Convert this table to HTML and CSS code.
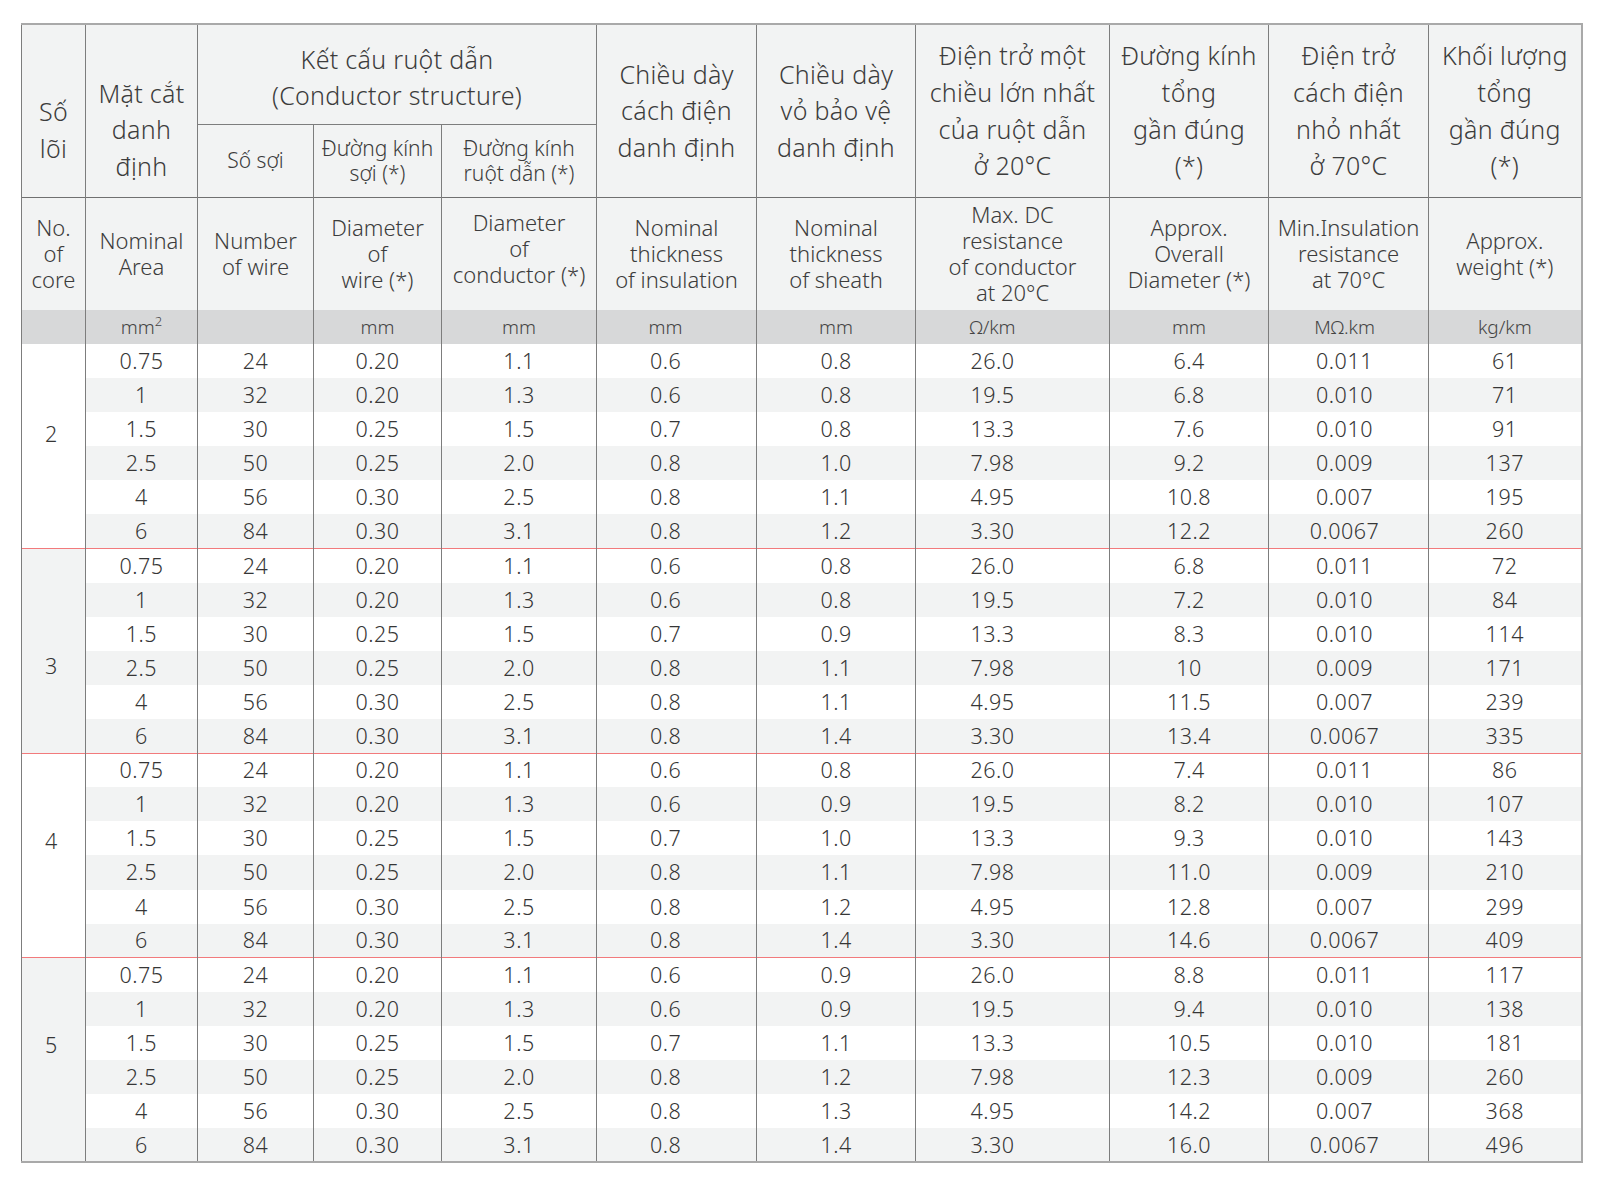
FILE: index.html
```html
<!DOCTYPE html>
<html lang="vi">
<head>
<meta charset="utf-8">
<title>Thông số kỹ thuật cáp</title>
<link rel="stylesheet" href="styles.css">
</head>
<body>
<table class="spec">
  <colgroup>
    <col style="width:64px"><col style="width:112px"><col style="width:116px"><col style="width:128px"><col style="width:155px"><col style="width:160px"><col style="width:159px"><col style="width:194px"><col style="width:159px"><col style="width:160px"><col style="width:153px">
  </colgroup>
  <thead>
    <tr class="vi">
      <th rowspan="2" class="low">Số<br>lõi</th>
      <th rowspan="2" class="low">Mặt cắt<br>danh<br>định</th>
      <th colspan="3" class="group">Kết cấu ruột dẫn<br>(Conductor structure)</th>
      <th rowspan="2">Chiều dày<br>cách điện<br>danh định</th>
      <th rowspan="2">Chiều dày<br>vỏ bảo vệ<br>danh định</th>
      <th rowspan="2">Điện trở một<br>chiều lớn nhất<br>của ruột dẫn<br>ở 20°C</th>
      <th rowspan="2">Đường kính<br>tổng<br>gần đúng<br>(*)</th>
      <th rowspan="2">Điện trở<br>cách điện<br>nhỏ nhất<br>ở 70°C</th>
      <th rowspan="2">Khối lượng<br>tổng<br>gần đúng<br>(*)</th>
    </tr>
    <tr class="vi-sub">
      <th>Số sợi</th>
      <th>Đường kính<br>sợi (*)</th>
      <th>Đường kính<br>ruột dẫn (*)</th>
    </tr>
    <tr class="en">
      <th>No.<br>of<br>core</th>
      <th>Nominal<br>Area</th>
      <th>Number<br>of wire</th>
      <th>Diameter<br>of<br>wire (*)</th>
      <th class="up">Diameter<br>of<br>conductor (*)</th>
      <th>Nominal<br>thickness<br>of insulation</th>
      <th>Nominal<br>thickness<br>of sheath</th>
      <th>Max. DC<br>resistance<br>of conductor<br>at 20°C</th>
      <th>Approx.<br>Overall<br>Diameter (*)</th>
      <th>Min.Insulation<br>resistance<br>at 70°C</th>
      <th>Approx.<br>weight (*)</th>
    </tr>
    <tr class="units">
      <th></th>
      <th>mm<sup>2</sup></th>
      <th></th>
      <th>mm</th>
      <th>mm</th>
      <th>mm</th>
      <th>mm</th>
      <th>Ω/km</th>
      <th>mm</th>
      <th>MΩ.km</th>
      <th>kg/km</th>
    </tr>
  </thead>
  <tbody>
    <tr class="grp"><td rowspan="6" class="core g2">2</td><td>0.75</td><td>24</td><td>0.20</td><td>1.1</td><td>0.6</td><td>0.8</td><td>26.0</td><td>6.4</td><td>0.011</td><td>61</td></tr>
    <tr><td>1</td><td>32</td><td>0.20</td><td>1.3</td><td>0.6</td><td>0.8</td><td>19.5</td><td>6.8</td><td>0.010</td><td>71</td></tr>
    <tr><td>1.5</td><td>30</td><td>0.25</td><td>1.5</td><td>0.7</td><td>0.8</td><td>13.3</td><td>7.6</td><td>0.010</td><td>91</td></tr>
    <tr><td>2.5</td><td>50</td><td>0.25</td><td>2.0</td><td>0.8</td><td>1.0</td><td>7.98</td><td>9.2</td><td>0.009</td><td>137</td></tr>
    <tr><td>4</td><td>56</td><td>0.30</td><td>2.5</td><td>0.8</td><td>1.1</td><td>4.95</td><td>10.8</td><td>0.007</td><td>195</td></tr>
    <tr><td>6</td><td>84</td><td>0.30</td><td>3.1</td><td>0.8</td><td>1.2</td><td>3.30</td><td>12.2</td><td>0.0067</td><td>260</td></tr>

    <tr class="grp sep"><td rowspan="6" class="core shade g3">3</td><td>0.75</td><td>24</td><td>0.20</td><td>1.1</td><td>0.6</td><td>0.8</td><td>26.0</td><td>6.8</td><td>0.011</td><td>72</td></tr>
    <tr><td>1</td><td>32</td><td>0.20</td><td>1.3</td><td>0.6</td><td>0.8</td><td>19.5</td><td>7.2</td><td>0.010</td><td>84</td></tr>
    <tr><td>1.5</td><td>30</td><td>0.25</td><td>1.5</td><td>0.7</td><td>0.9</td><td>13.3</td><td>8.3</td><td>0.010</td><td>114</td></tr>
    <tr><td>2.5</td><td>50</td><td>0.25</td><td>2.0</td><td>0.8</td><td>1.1</td><td>7.98</td><td>10</td><td>0.009</td><td>171</td></tr>
    <tr><td>4</td><td>56</td><td>0.30</td><td>2.5</td><td>0.8</td><td>1.1</td><td>4.95</td><td>11.5</td><td>0.007</td><td>239</td></tr>
    <tr><td>6</td><td>84</td><td>0.30</td><td>3.1</td><td>0.8</td><td>1.4</td><td>3.30</td><td>13.4</td><td>0.0067</td><td>335</td></tr>

    <tr class="grp sep"><td rowspan="6" class="core g4">4</td><td>0.75</td><td>24</td><td>0.20</td><td>1.1</td><td>0.6</td><td>0.8</td><td>26.0</td><td>7.4</td><td>0.011</td><td>86</td></tr>
    <tr><td>1</td><td>32</td><td>0.20</td><td>1.3</td><td>0.6</td><td>0.9</td><td>19.5</td><td>8.2</td><td>0.010</td><td>107</td></tr>
    <tr><td>1.5</td><td>30</td><td>0.25</td><td>1.5</td><td>0.7</td><td>1.0</td><td>13.3</td><td>9.3</td><td>0.010</td><td>143</td></tr>
    <tr><td>2.5</td><td>50</td><td>0.25</td><td>2.0</td><td>0.8</td><td>1.1</td><td>7.98</td><td>11.0</td><td>0.009</td><td>210</td></tr>
    <tr><td>4</td><td>56</td><td>0.30</td><td>2.5</td><td>0.8</td><td>1.2</td><td>4.95</td><td>12.8</td><td>0.007</td><td>299</td></tr>
    <tr><td>6</td><td>84</td><td>0.30</td><td>3.1</td><td>0.8</td><td>1.4</td><td>3.30</td><td>14.6</td><td>0.0067</td><td>409</td></tr>

    <tr class="grp sep"><td rowspan="6" class="core shade g5">5</td><td>0.75</td><td>24</td><td>0.20</td><td>1.1</td><td>0.6</td><td>0.9</td><td>26.0</td><td>8.8</td><td>0.011</td><td>117</td></tr>
    <tr><td>1</td><td>32</td><td>0.20</td><td>1.3</td><td>0.6</td><td>0.9</td><td>19.5</td><td>9.4</td><td>0.010</td><td>138</td></tr>
    <tr><td>1.5</td><td>30</td><td>0.25</td><td>1.5</td><td>0.7</td><td>1.1</td><td>13.3</td><td>10.5</td><td>0.010</td><td>181</td></tr>
    <tr><td>2.5</td><td>50</td><td>0.25</td><td>2.0</td><td>0.8</td><td>1.2</td><td>7.98</td><td>12.3</td><td>0.009</td><td>260</td></tr>
    <tr><td>4</td><td>56</td><td>0.30</td><td>2.5</td><td>0.8</td><td>1.3</td><td>4.95</td><td>14.2</td><td>0.007</td><td>368</td></tr>
    <tr><td>6</td><td>84</td><td>0.30</td><td>3.1</td><td>0.8</td><td>1.4</td><td>3.30</td><td>16.0</td><td>0.0067</td><td>496</td></tr>
  </tbody>
</table>
</body>
</html>
```

FILE: styles.css
```css
html, body {
  margin: 0;
  padding: 0;
  background: #ffffff;
}

body {
  font-family: "Noto Sans", "Liberation Sans", sans-serif;
  font-weight: 300;
  color: #3a3a3a;
}

.spec {
  margin: 23px 0 0 21px;
  width: 1560px;
  table-layout: fixed;
  border-collapse: collapse;
  border-top: 2px solid #a9a9a9;
  border-bottom: 2px solid #a9a9a9;
  border-left: 1px solid #7a7a7a;
  border-right: 2px solid #a9a9a9;
}

.spec th,
.spec td {
  padding: 0;
  text-align: center;
  vertical-align: middle;
  white-space: nowrap;
  border-left: 1px solid #7d7d7d;
  border-right: 1px solid #7d7d7d;
}

.spec thead th {
  background: #f2f3f3;
  font-weight: 300;
  color: #3c3c3c;
}

.vi {
  height: 100px;
}

.vi th {
  font-size: 25px;
  line-height: 36.7px;
  letter-spacing: 0.3px;
}

.vi th.low {
  padding-top: 38px;
}

.vi th.group {
  border-bottom: 1px solid #7d7d7d;
  padding-top: 6px;
}

.vi-sub {
  height: 73px;
}

.vi-sub th {
  font-size: 21px;
  line-height: 25px;
}

.en {
  height: 113px;
}

.en th {
  font-size: 22px;
  line-height: 25.8px;
  border-top: 1px solid #707070;
}

.en th.up {
  padding-bottom: 10px;
}

.units {
  height: 34px;
}

.spec .units th {
  background: #d7d8d9;
  font-size: 19px;
  line-height: 24px;
  color: #444;
}

.units sup {
  font-size: 13px;
  line-height: 0;
  vertical-align: 8px;
}

.spec tbody tr {
  height: 34.1px;
}

.spec tbody td {
  font-size: 21.5px;
  line-height: 26px;
  letter-spacing: 0.5px;
  background: #ffffff;
  color: #363636;
}

.spec tbody tr:nth-child(even) td {
  background: #f2f3f3;
}

.spec tbody td.core {
  background: #ffffff;
  padding-right: 4px;
}

.spec tbody td.core.shade {
  background: #f2f3f3;
}

.spec tbody td.g2 { padding-bottom: 25px; }
.spec tbody td.g3 { padding-top: 31px; }
.spec tbody td.g4 { padding-bottom: 28px; }
.spec tbody td.g5 { padding-bottom: 30px; }

.spec tbody tr.sep td {
  border-top: 1px solid #f27a7c;
}

/* insulation column values sit left of centre */
.spec tbody tr.grp td:nth-child(6),
.spec tbody tr:not(.grp) td:nth-child(5),
.spec .units th:nth-child(6) {
  padding-right: 22px;
}

/* resistance column values sit left of centre */
.spec tbody tr.grp td:nth-child(8),
.spec tbody tr:not(.grp) td:nth-child(7),
.spec .units th:nth-child(8) {
  padding-right: 40px;
}

/* insulation-resistance column slightly left */
.spec tbody tr.grp td:nth-child(10),
.spec tbody tr:not(.grp) td:nth-child(9),
.spec .units th:nth-child(10) {
  padding-right: 8px;
}
```
